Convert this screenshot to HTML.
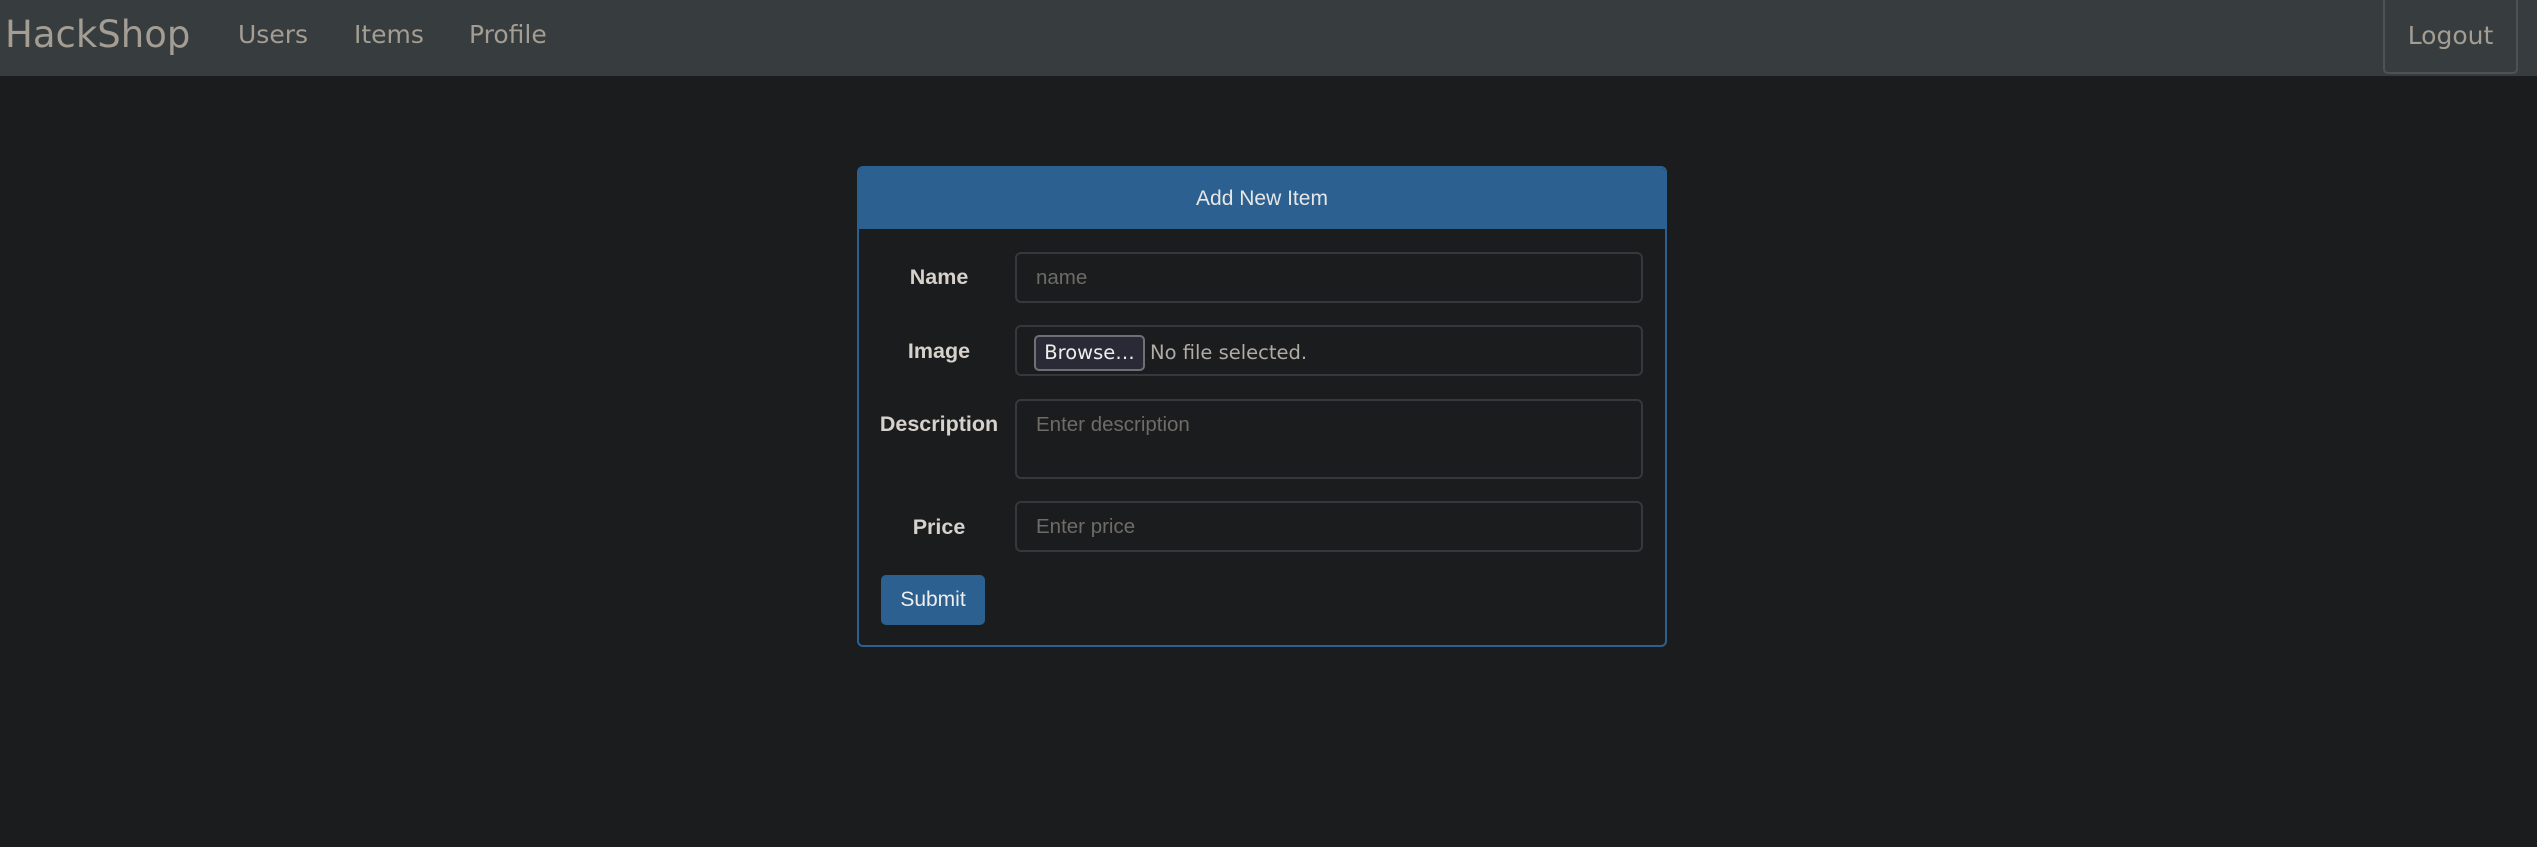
<!DOCTYPE html>
<html><head><meta charset="utf-8"><style>
*{box-sizing:border-box;margin:0;padding:0}
body{width:2537px;height:847px;background:#1b1c1e;font-family:"Liberation Sans",Arial,sans-serif;overflow:hidden;position:relative}
.nav{position:absolute;left:0;top:0;width:2537px;height:76px;background:#373c3f;font-family:"DejaVu Sans",sans-serif;color:#a39d93}
.nav span{position:absolute;top:0;line-height:70px}
.brand{left:5px;font-size:37px}
.link{font-size:25px}
.logout{position:absolute;left:2383px;top:-2px;width:135px;height:76px;border:2px solid #4d5256;border-top:none;border-radius:0 0 5px 5px;font-size:25px;line-height:76px;text-align:center}
.card{position:absolute;left:857px;top:166px;width:810px;height:481px;border:2px solid #2b6090;border-radius:6px;overflow:hidden}
.head{height:61px;background:#2b6090;color:#e6e6e6;font-size:21px;text-align:center;line-height:62px}
.lbl{position:absolute;left:20px;width:120px;text-align:center;font-weight:bold;font-size:21.5px;color:#d6d2cb}
.inp{position:absolute;left:156px;width:628px;border:2px solid #36393c;border-radius:6px;font-size:20.5px;color:#6f6c67;padding-left:19px}
.btn{position:absolute;left:22px;top:407px;width:104px;height:50px;background:#2b6090;border-radius:5px;color:#eee;font-size:21px;text-align:center;line-height:50px}
.browse{position:absolute;left:17px;top:8px;width:111px;height:36px;background:#2a2a36;border:2px solid #6f7076;border-radius:5px;color:#eee;font-family:"DejaVu Sans",sans-serif;font-size:19.5px;line-height:32px;text-align:center}
.nf{position:absolute;left:133px;top:0;line-height:52px;font-family:"DejaVu Sans",sans-serif;font-size:19.5px;color:#b0aba3}
</style></head><body>
<div class="nav">
<span class="brand">HackShop</span>
<span class="link" style="left:238px">Users</span>
<span class="link" style="left:354px">Items</span>
<span class="link" style="left:469px">Profile</span>
<div class="logout">Logout</div>
</div>
<div class="card">
<div class="head">Add New Item</div>
<div class="lbl" style="top:97px">Name</div>
<div class="inp" style="top:84px;height:51px;line-height:47px">name</div>
<div class="lbl" style="top:171px">Image</div>
<div class="inp" style="top:157px;height:51px;padding:0"><div class="browse">Browse…</div><div class="nf">No file selected.</div></div>
<div class="lbl" style="top:244px">Description</div>
<div class="inp" style="top:231px;height:80px;line-height:47px">Enter description</div>
<div class="lbl" style="top:347px">Price</div>
<div class="inp" style="top:333px;height:51px;line-height:47px">Enter price</div>
<div class="btn">Submit</div>
</div>
</body></html>
